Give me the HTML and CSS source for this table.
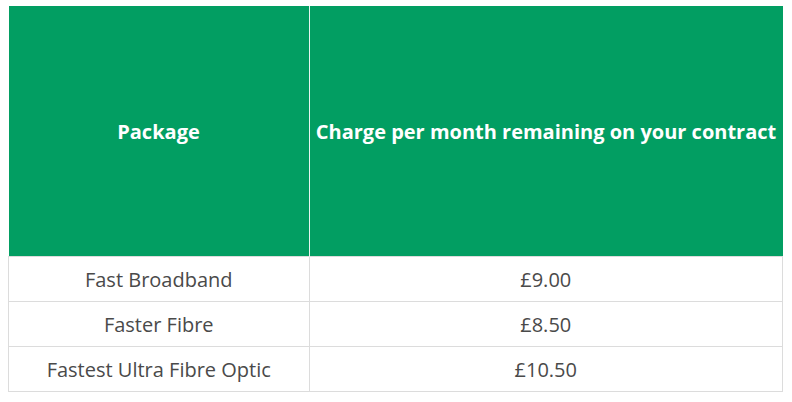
FILE: index.html
```html
<!DOCTYPE html>
<html>
<head>
<meta charset="utf-8">
<link rel="stylesheet" href="styles.css">
</head>
<body>
<table class="price-table">
  <thead>
    <tr>
      <th class="col-package">Package</th>
      <th class="col-charge">Charge per month remaining on your contract</th>
    </tr>
  </thead>
  <tbody>
    <tr><td>Fast Broadband</td><td>£9.00</td></tr>
    <tr><td>Faster Fibre</td><td>£8.50</td></tr>
    <tr><td>Fastest Ultra Fibre Optic</td><td>£10.50</td></tr>
  </tbody>
</table>
</body>
</html>
```

FILE: styles.css
```css
body {
  margin: 6px 8px;
  background: #fff;
  font-family: "Open Sans", "Liberation Sans", sans-serif;
}
.price-table {
  border-collapse: collapse;
  width: 775px;
  table-layout: fixed;
}
.price-table th {
  background: #029e62;
  color: #fff;
  font-weight: 700;
  font-size: 20px;
  height: 250px;
  padding: 0;
  text-align: center;
  vertical-align: middle;
  border: 1px solid #e8f5ef;
  border-top: none;
  border-bottom: none;
}
.price-table th:first-child { border-left: none; }
.price-table th:last-child { border-right: none; }
.col-package { width: 300px; }
.price-table td {
  height: 44px;
  padding: 0;
  text-align: center;
  vertical-align: middle;
  font-size: 20px;
  color: #4a4a4a;
  border: 1px solid #dcdcdc;
}
```
